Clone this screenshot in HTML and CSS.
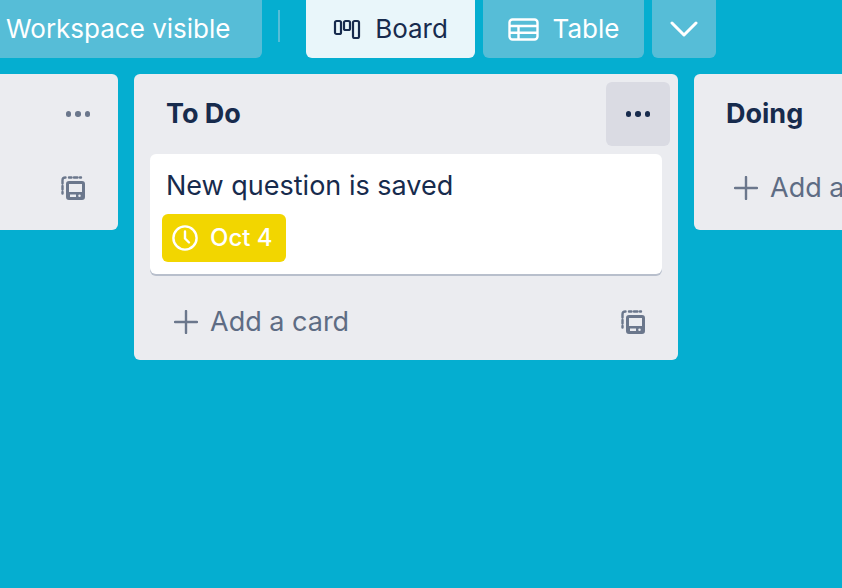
FILE: index.html
```html
<!DOCTYPE html>
<html lang="en">
<head>
<meta charset="utf-8">
<title>Board</title>
<link rel="stylesheet" href="styles.css">
</head>
<body>
<header class="bar">
  <button class="btn btn-visibility">Workspace visible</button>
  <span class="divider"></span>
  <button class="btn btn-active btn-board">
    <svg class="ico-board" width="28" height="20" viewBox="0 0 28 20" fill="none" stroke="#172b4d" stroke-width="2.2"><rect x="2" y="2" width="6" height="13" rx="1.6"/><rect x="11" y="2" width="6" height="9" rx="1.6"/><rect x="20" y="2" width="6" height="17" rx="1.6"/></svg>
    Board
  </button>
  <button class="btn btn-table">
    <svg width="31" height="23" viewBox="0 0 31 23" fill="none" stroke="#fff" stroke-width="2.4"><rect x="1.5" y="1.5" width="28" height="20" rx="3"/><path d="M1.5 8h28M1.5 14.8h28M10.5 8v13"/></svg>
    Table
  </button>
  <button class="btn btn-more" aria-label="More">
    <svg width="28" height="16" viewBox="0 0 28 16" fill="none" stroke="#fff" stroke-width="3" stroke-linecap="round" stroke-linejoin="round"><path d="M2 2l12 12L26 2"/></svg>
  </button>
</header>
<main class="board">
  <section class="list list-first">
    <div class="list-head">
      <h2 class="list-title"></h2>
      <span class="menu"><i></i><i></i><i></i></span>
    </div>
    <div class="list-foot">
      <span class="add"></span>
      <svg class="tpl" width="26" height="26" viewBox="0 0 26 26"><use href="#tpl"/></svg>
    </div>
  </section>
  <section class="list">
    <div class="list-head">
      <h2 class="list-title">To Do</h2>
      <span class="menu menu-on"><i></i><i></i><i></i></span>
    </div>
    <article class="card">
      <p class="card-title">New question is saved</p>
      <span class="due">
        <svg width="26" height="26" viewBox="0 0 26 26" fill="none" stroke="#fff" stroke-width="2.4" stroke-linecap="round" stroke-linejoin="round"><circle cx="13" cy="13" r="11.6"/><path d="M13 6.5V13.5l4 4"/></svg>
        Oct 4
      </span>
    </article>
    <div class="list-foot">
      <span class="add">
        <svg width="24" height="24" viewBox="0 0 24 24" stroke="#6b778c" stroke-width="2.4" stroke-linecap="round"><path d="M12 1v22M1 12h22"/></svg>
        Add a card
      </span>
      <svg class="tpl" width="26" height="26" viewBox="0 0 26 26"><use href="#tpl"/></svg>
    </div>
  </section>
  <section class="list list-last">
    <div class="list-head">
      <h2 class="list-title">Doing</h2>
    </div>
    <div class="list-foot">
      <span class="add">
        <svg width="24" height="24" viewBox="0 0 24 24" stroke="#6b778c" stroke-width="2.4" stroke-linecap="round"><path d="M12 1v22M1 12h22"/></svg>
        Add a card
      </span>
    </div>
  </section>
</main>
<svg class="defs" width="0" height="0" aria-hidden="true">
  <symbol id="tpl" viewBox="0 0 26 26">
    <path d="M9 2.5h2.5M14 2.5h3.5M20 2.5h1M2.5 8.5V5.5Q2.500 2.500 5.500 2.500M2.500 11v3.500M2.500 17v1.500" fill="none" stroke="#6b778c" stroke-width="2.4" stroke-linecap="round"/>
    <path fill="#6b778c" fill-rule="evenodd" d="M9 6h13a3 3 0 0 1 3 3v13a3 3 0 0 1-3 3H9a3 3 0 0 1-3-3V9a3 3 0 0 1 3-3zm0 3v8h13V9H9zm1 10.500v2.500h6v-2.500h-6zm9.500 0a1.250 1.250 0 1 0 0 2.500 1.250 1.250 0 0 0 0-2.500z"/>
  </symbol>
</svg>
</body>
</html>
```

FILE: styles.css
```css
* { box-sizing: border-box; }
html, body { margin: 0; height: 100%; }
body {
  background: #05aed0;
  overflow: hidden;
  font-family: Inter, "Liberation Sans", sans-serif;
  color: #172b4d;
  width: 842px;
  height: 588px;
}
.bar {
  display: flex;
  align-items: stretch;
  height: 58px;
  margin-top: -8px;
  height: 66px;
  margin-left: -20px;
}
.btn {
  display: flex;
  align-items: center;
  justify-content: center;
  gap: 14px;
  border: 0;
  padding: 8px 0 0;
  border-radius: 6px;
  background: #56bdd7;
  color: #fff;
  font: 400 26px/32px Inter, "Liberation Sans", sans-serif;
}
.btn-visibility { width: 282px; padding-left: 26px; justify-content: flex-start; }
.divider { width: 2px; height: 32px; margin: 18px 26px 0 16px; background: #56bdd7; }
.btn-active { background: #e9f6fa; color: #172b4d; width: 169px; }
.btn-table { width: 161px; margin-left: 8px; }
.btn-more { width: 64px; margin-left: 8px; }
.ico-board { margin-right: 0; }
.board {
  display: flex;
  align-items: flex-start;
  gap: 16px;
  margin-top: 16px;
  margin-left: -426px;
  width: 1800px;
}
.list {
  flex: 0 0 544px;
  background: #ebecf0;
  border-radius: 6px;
  padding: 8px 16px 0;
}
.list-head {
  display: flex;
  justify-content: space-between;
  height: 64px;
  margin-right: -8px;
  margin-bottom: 8px;
  align-items: center;
}
.list-title {
  margin: 0;
  padding-left: 16px;
  font: 700 27px/32px Inter, "Liberation Sans", sans-serif;
}
.menu {
  width: 64px;
  height: 64px;
  border-radius: 6px;
  display: flex;
  align-items: center;
  justify-content: center;
  gap: 4px;
}
.menu i { width: 5.500px; height: 5.500px; border-radius: 50%; background: #6b778c; }
.menu-on { background: #dadbe3; }
.menu-on i { background: #172b4d; }
.card {
  background: #fff;
  border-radius: 6px;
  box-shadow: 0 2px 0 #b8bfcc;
  height: 120px;
  padding: 16px 12px 0;
}
.card-title { margin: 0 0 12px; padding-left: 4px; font: 400 27px/32px Inter, "Liberation Sans", sans-serif; }
.due {
  display: inline-flex;
  align-items: center;
  gap: 12px;
  height: 48px;
  padding: 0 13px 0 10px;
  background: #f2d600;
  color: #fff;
  border-radius: 6px;
  font: 500 24px/32px Inter, "Liberation Sans", sans-serif;
}
.list-foot {
  display: flex;
  justify-content: space-between;
  align-items: center;
  height: 76px;
  padding: 0 16px 0 24px;
  margin-top: 10px;
}
.list-first .list-head, .list-last .list-head { margin-bottom: 0; }
.list-first .list-foot, .list-last .list-foot { margin-top: 0; height: 84px; }
.add { display: flex; align-items: center; gap: 12px; color: #5e6c84; font: 400 27px/32px Inter, "Liberation Sans", sans-serif; white-space: nowrap; }
.tpl { display: block; }
.defs { position: absolute; }
```
